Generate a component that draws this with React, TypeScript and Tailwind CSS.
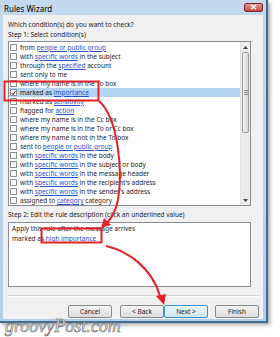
import React from "react";

type Seg = { t: string; l?: boolean };
const rows: Seg[][] = [
  [{ t: "from " }, { t: "people or public group", l: true }],
  [{ t: "with " }, { t: "specific words", l: true }, { t: " in the subject" }],
  [{ t: "through the " }, { t: "specified", l: true }, { t: " account" }],
  [{ t: "sent only to me" }],
  [{ t: "where my name is in the To box" }],
  [{ t: "marked as " }, { t: "importance", l: true }],
  [{ t: "marked as " }, { t: "sensitivity", l: true }],
  [{ t: "flagged for " }, { t: "action", l: true }],
  [{ t: "where my name is in the Cc box" }],
  [{ t: "where my name is in the To or Cc box" }],
  [{ t: "where my name is not in the To box" }],
  [{ t: "sent to " }, { t: "people or public group", l: true }],
  [{ t: "with " }, { t: "specific words", l: true }, { t: " in the body" }],
  [{ t: "with " }, { t: "specific words", l: true }, { t: " in the subject or body" }],
  [{ t: "with " }, { t: "specific words", l: true }, { t: " in the message header" }],
  [{ t: "with " }, { t: "specific words", l: true }, { t: " in the recipient's address" }],
  [{ t: "with " }, { t: "specific words", l: true }, { t: " in the sender's address" }],
  [{ t: "assigned to " }, { t: "category", l: true }, { t: " category" }],
];

function Btn({ label, primary }: { label: string; primary?: boolean }) {
  return (
    <div
      className={
        "w-[44px] h-[13px] rounded-[2px] border flex items-center justify-center text-[6.5px] text-[#222] " +
        (primary
          ? "border-[#3c8fd0] bg-gradient-to-b from-[#eaf6fd] to-[#cfe6f7]"
          : "border-[#8a8a8a] bg-gradient-to-b from-[#f4f4f4] to-[#dcdcdc]")
      }
    >
      {label}
    </div>
  );
}

export default function App() {
  return (
    <div
      className="relative w-[280px] h-[337px] bg-white overflow-hidden"
      style={{ fontFamily: '"Noto Sans", "DejaVu Sans", sans-serif' }}
    >
      {/* window */}
      <div className="w-[268px] h-[323px] flex flex-col pl-[3px] pr-[3px] pb-[2px] bg-gradient-to-b from-[#c3d9ef] to-[#b5cfe8] border-r-2 border-b-2 border-[#3d6f94] shadow-[2px_2px_4px_rgba(0,0,0,0.35)]">
        {/* title bar */}
        <div className="h-[15px] flex items-center justify-between pl-[1px]">
          <span className="text-[8px] text-black leading-none mt-[2px]">Rules Wizard</span>
          <div className="w-[19px] h-[9px] mr-[0px] mt-[-1px] rounded-[2px] border border-[#7a2a2a] bg-gradient-to-b from-[#e09a8e] to-[#c4453a] flex items-center justify-center">
            <svg width="7" height="6" viewBox="0 0 7 6">
              <path d="M1 0.8 L6 5.2 M6 0.8 L1 5.2" stroke="#fff" strokeWidth="1.4" />
            </svg>
          </div>
        </div>
        {/* content */}
        <div className="flex-1 bg-[#f0f0f0] flex flex-col pl-[5px] pt-[5px] text-[6.5px] text-[#1e1e1e]">
          <div className="h-[10px] leading-[10px]">Which condition(s) do you want to check?</div>
          <div className="h-[10px] leading-[10px]">Step 1: Select condition(s)</div>
          {/* listbox */}
          <div className="mt-[1px] w-[243px] h-[165px] border border-[#8a8f97] bg-white flex">
            <div className="flex-1 flex flex-col pt-[1px]">
              {rows.map((r, i) => (
                <div
                  key={i}
                  className={"h-[9px] flex items-center pl-[1px] " + (i === 5 ? "bg-[#b3d4f3]" : "")}
                >
                  <div className="w-[7px] h-[7px] border border-[#8e8f8f] bg-gradient-to-br from-[#f0f0f0] to-white flex items-center justify-center shrink-0">
                    {i === 5 && (
                      <svg width="6" height="6" viewBox="0 0 6 6">
                        <path d="M0.8 3 L2.4 4.8 L5.4 0.8" stroke="#3a1010" strokeWidth="1.2" fill="none" />
                      </svg>
                    )}
                  </div>
                  <span className="ml-[3px] whitespace-nowrap leading-[9px]">
                    {r.map((s, j) =>
                      s.l ? (
                        <span key={j} className="text-[#2255cc] underline">
                          {s.t}
                        </span>
                      ) : (
                        <span key={j}>{s.t.replace(/ /g, "\u00a0")}</span>
                      )
                    )}
                  </span>
                </div>
              ))}
            </div>
            {/* scrollbar */}
            <div className="w-[10px] bg-[#ececec] border-l border-[#e3e3e3] flex flex-col">
              <div className="h-[10px] flex items-center justify-center">
                <svg width="5" height="3" viewBox="0 0 5 3">
                  <path d="M0 3 L2.5 0 L5 3 Z" fill="#444" />
                </svg>
              </div>
              <div className="h-[81px] mx-[1px] rounded-[2px] border border-[#9c9c9c] bg-gradient-to-r from-[#f2f2f2] to-[#d6d6d6] flex flex-col items-center justify-center gap-[1px]">
                <div className="w-[4px] h-[1px] bg-[#888]" />
                <div className="w-[4px] h-[1px] bg-[#888]" />
                <div className="w-[4px] h-[1px] bg-[#888]" />
              </div>
              <div className="flex-1" />
              <div className="h-[10px] flex items-center justify-center">
                <svg width="5" height="3" viewBox="0 0 5 3">
                  <path d="M0 0 L2.5 3 L5 0 Z" fill="#444" />
                </svg>
              </div>
            </div>
          </div>
          <div className="mt-[4px] h-[10px] leading-[10px]">
            Step 2: Edit the rule description (click an underlined value)
          </div>
          {/* description */}
          <div className="mt-[2px] w-[243px] h-[65px] border border-[#8a8f97] bg-white px-[3px] pt-[1px]">
            <div className="h-[10px] leading-[10px]">Apply this rule after the message arrives</div>
            <div className="h-[10px] leading-[10px]">
              marked as <span className="text-[#2255cc] underline">high importance</span>
            </div>
          </div>
          {/* separator */}
          <div className="mt-[8px] w-[251px] h-[2px] border-t border-[#d5d5d5] border-b border-b-white" />
          {/* buttons */}
          <div className="mt-[8px] flex justify-end pr-[4px]">
            <Btn label="Cancel" />
            <div className="w-[8px]" />
            <Btn label="< Back" />
            <Btn label="Next >" primary />
            <div className="w-[7px]" />
            <Btn label="Finish" />
          </div>
        </div>
      </div>

      {/* annotations */}
      <svg className="absolute left-0 top-0" width="280" height="337" viewBox="0 0 280 337">
        <rect x="4.5" y="81.5" width="94" height="19" fill="none" stroke="#e5222a" strokeWidth="2" />
        <rect x="41.5" y="228.5" width="60" height="14" fill="none" stroke="#e5222a" strokeWidth="2" />
        <path d="M99 101 C 118 118, 123 170, 118 200 C 115 213, 111 219, 107 223" fill="none" stroke="#e5222a" strokeWidth="2" />
        <path d="M101 228 L104 218 L111 225 Z" fill="#e5222a" />
        <path d="M106 246 C 128 251, 152 268, 160 296" fill="none" stroke="#e5222a" strokeWidth="2" />
        <path d="M164 305 L156 296 L166 294 Z" fill="#e5222a" />
      </svg>

      {/* watermark */}
      <div
        className="absolute left-[5px] top-[317px] text-[18px] italic text-[#f4f4f4] [-webkit-text-stroke:0.7px_#7a7a7a] leading-none"
        style={{ fontFamily: '"Liberation Serif", serif' }}
      >
        groovyPost.com
      </div>
    </div>
  );
}
